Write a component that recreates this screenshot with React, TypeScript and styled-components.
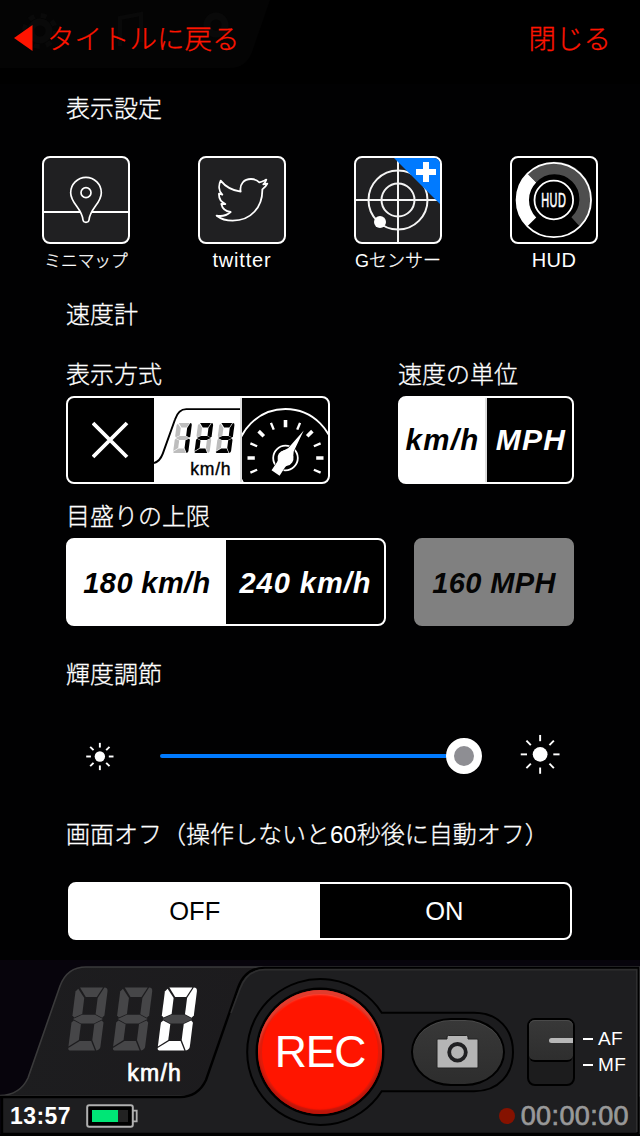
import React from "react";
import styled, { createGlobalStyle } from "styled-components";

const GlobalStyle = createGlobalStyle`
  *, *::before, *::after { box-sizing: border-box; }
  body { margin: 0; background: #010102; }
  button { font: inherit; color: inherit; background: none; border: 0; padding: 0; margin: 0; }
  svg { display: block; }
`;

const Screen = styled.div`
  width: 640px;
  height: 1136px;
  overflow: hidden;
  display: flex;
  flex-direction: column;
  background: #010102;
  color: #fff;
  font-family: "Liberation Sans", "Noto Sans CJK JP", sans-serif;
  font-weight: 300;
`;

const Header = styled.header`
  display: grid;
  height: 84px;
  background: #000;
  > * { grid-area: 1 / 1; }
`;

const HeaderBar = styled.div`
  display: flex;
  justify-content: space-between;
  align-items: center;
  height: 76px;
  padding: 0 29px 0 14px;
  color: #ff1400;
  font-size: 27.5px;
  line-height: 32px;
  -webkit-text-stroke: 0.3px #ff1400;
`;

const HeaderButton = styled.button`
  display: flex;
  align-items: center;
  gap: 14px;
  white-space: nowrap;
`;

const HeaderText = styled.span`
  padding-top: 3px;
`;

const Settings = styled.main`
  height: 876px;
  display: flex;
  flex-direction: column;
  padding: 13px 42px 0;
`;

const Label = styled.h2<{ $top?: number }>`
  margin: ${(p) => p.$top ?? 0}px 0 0 24px;
  height: 24px;
  line-height: 24px;
  font-size: 24px;
  font-weight: 300;
  white-space: nowrap;
  -webkit-text-stroke: 0.3px #fff;
`;

const Latin = styled.span`
  -webkit-text-stroke: 0;
`;

const Tiles = styled.div`
  display: flex;
  justify-content: space-between;
  margin-top: 35px;
`;

const Tile = styled.button`
  width: 88px;
  display: flex;
  flex-direction: column;
  align-items: center;
`;

const TileFace = styled.span<{ $black?: boolean }>`
  width: 88px;
  height: 88px;
  border: 2px solid #fff;
  border-radius: 8px;
  overflow: hidden;
  background: ${(p) => (p.$black ? "#000" : "#202022")};
`;

const TileCaption = styled.span<{ $size: number; $spacing?: number; $drop?: number }>`
  margin-top: ${(p) => 4 + (p.$drop ?? 0)}px;
  height: ${(p) => 24 - (p.$drop ?? 0)}px;
  line-height: 24px;
  font-size: ${(p) => p.$size}px;
  letter-spacing: ${(p) => p.$spacing ?? 0}px;
  white-space: nowrap;
  -webkit-text-stroke: ${(p) => (p.$drop ? 0.3 : 0)}px #fff;
`;

const Fields = styled.div<{ $top: number; $gap: number }>`
  display: flex;
  align-items: flex-end;
  gap: ${(p) => p.$gap}px;
  margin: ${(p) => p.$top}px 0 0 24px;
`;

const Field = styled.div`
  display: flex;
  flex-direction: column;
  gap: 9px;
  ${Label} { margin-left: 0; }
`;

const Segmented = styled.div<{ $width: number; $height?: number; $disabled?: boolean; $lead?: boolean }>`
  display: flex;
  width: ${(p) => p.$width}px;
  height: ${(p) => p.$height ?? 88}px;
  border: 2px solid ${(p) => (p.$disabled ? "#808080" : "#fff")};
  border-radius: 8px;
  overflow: hidden;
  background: ${(p) =>
    p.$disabled ? "#808080" : p.$lead ? "linear-gradient(90deg, #fff 50%, #000 50%)" : "#000"};
`;

const Segment = styled.button<{ $on?: boolean; $divider?: boolean }>`
  flex: 1;
  display: flex;
  align-items: center;
  justify-content: center;
  overflow: hidden;
  background: ${(p) => (p.$on ? "#fff" : "transparent")};
  color: ${(p) => (p.$on ? "#000" : "#fff")};
  border-left: ${(p) => (p.$divider ? "2px solid #ddd" : "0")};
`;

const Unit = styled.span<{ $spacing?: number; $size?: number; $drop?: number; $indent?: number; $dim?: boolean }>`
  padding: ${(p) => p.$drop ?? 0}px 0 0 ${(p) => p.$indent ?? 0}px;
  font-size: ${(p) => p.$size ?? 29}px;
  font-weight: 700;
  font-style: italic;
  letter-spacing: ${(p) => p.$spacing ?? 0}px;
  white-space: nowrap;
  color: ${(p) => (p.$dim ? "#050505" : "inherit")};
`;

const SliderRow = styled.div`
  display: flex;
  align-items: center;
  height: 44px;
  margin-top: 47px;
  padding: 0 37px 0 42px;
`;

const Track = styled.div`
  flex: none;
  display: flex;
  align-items: center;
  width: 322px;
  height: 36px;
  margin: 0 37px 0 44px;
`;

const TrackFill = styled.div`
  flex: 1;
  height: 4px;
  margin-right: -2px;
  border-radius: 2px;
  background: #007aff;
`;

const Thumb = styled.div`
  width: 36px;
  height: 36px;
  border-radius: 50%;
  border: 8px solid #fff;
  background: #8e8e93;
`;

const PowerToggle = styled(Segmented)`
  margin: 35px 0 0 26px;
  padding-right: 1px;
  font-size: 25.5px;
`;

const Dock = styled.footer`
  display: grid;
  width: 640px;
  height: 176px;
  > * { grid-area: 1 / 1; }
`;

const DockFront = styled.div`
  display: flex;
  flex-direction: column;
`;

const Controls = styled.div`
  display: flex;
  align-items: flex-start;
  height: 138px;
  padding-left: 67px;
`;

const Speed = styled.div`
  width: 191px;
  padding-top: 26px;
`;

const SpeedUnit = styled.div`
  width: 115px;
  margin-top: 9px;
  line-height: 24px;
  font-size: 23px;
  letter-spacing: 1.2px;
  text-align: right;
  -webkit-text-stroke: 0.7px #fff;
`;

const RecButton = styled.button`
  width: 124px;
  height: 124px;
  margin-top: 30px;
  border-radius: 50%;
  background: #ff1500;
  box-shadow: 0 0 0 2.5px #000, inset 0 0 0 4px rgba(170, 40, 30, 0.35),
    inset 0 5px 2px rgba(255, 150, 140, 0.4), inset 0 -4px 2px rgba(120, 0, 0, 0.4);
  font-size: 44.5px;
  letter-spacing: -1.2px;
  line-height: 124px;
  text-align: center;
`;

const ShutterButton = styled.button`
  display: flex;
  align-items: center;
  justify-content: center;
  width: 94px;
  height: 68px;
  margin: 58px 0 0 29px;
  border: 2px solid #000;
  border-radius: 40px / 34px;
  background: linear-gradient(#383838, #2d2d2d);
  box-shadow: inset 0 1px 0 #4a4a4a;
`;

const FocusSwitch = styled.div`
  width: 48px;
  height: 68px;
  margin: 58px 0 0 22px;
  border: 2px solid #000;
  border-radius: 8px;
  background: #1c1c1d;
`;

const FocusKnob = styled.div`
  display: flex;
  align-items: center;
  justify-content: flex-end;
  height: 42px;
  border-bottom: 2px solid #000;
  border-radius: 6px;
  background: linear-gradient(#383838, #2e2e2e);
  box-shadow: inset 0 1px 0 #4a4a4a;
`;

const FocusMark = styled.span`
  width: 24px;
  height: 5px;
  border-radius: 3px 0 0 3px;
  background: #b8b8b8;
`;

const FocusLabels = styled.div`
  display: flex;
  flex-direction: column;
  gap: 2px;
  margin: 67px 0 0 8px;
`;

const FocusLabel = styled.div`
  display: flex;
  align-items: center;
  gap: 5px;
  height: 24px;
  font-size: 19px;
  letter-spacing: 0.4px;
  &::before {
    content: "";
    width: 10px;
    height: 2px;
    background: #fff;
  }
`;

const Status = styled.div`
  display: flex;
  align-items: center;
  height: 36px;
  padding: 0 11px 0 10px;
`;

const Clock = styled.time`
  width: 76px;
  padding-top: 1px;
  font-size: 23px;
  font-weight: 700;
  letter-spacing: 0.4px;
`;

const Elapsed = styled.div`
  display: flex;
  align-items: center;
  gap: 6px;
  margin-left: auto;
  color: #999;
  font-size: 27px;
  letter-spacing: 0.4px;
  -webkit-text-stroke: 0.7px #999;
  &::before {
    content: "";
    width: 16px;
    height: 16px;
    border-radius: 50%;
    background: #851200;
  }
`;

/* Segments of one upright digit, 32 x 63 */
const SEGMENTS: Record<string, string> = {
  a: "M4 0 L27 0 L22 9.5 L11 9.5 Z",
  f: "M2.4 1.2 L9.6 10.5 L9.6 26.3 L2 30 L0 28 L0 4 Z",
  b: "M28.4 0 Q32 0 32 4 L32 28 L30 30.2 L23 26.6 L23 10.5 Z",
  g: "M1 31.5 L9.5 27.2 L22.6 27.2 L31 31.5 L22.6 35.8 L9.5 35.8 Z",
  e: "M2 33 L9.6 36.7 L9.6 52.5 L0 59 L0 35 Z",
  c: "M30 32.8 L32 35 L32 59 Q32 62 28.4 63 L23 52.5 L23 36.4 Z",
  d: "M0 60.4 L10.6 53.5 L22 53.5 L27 63 L3 63 Q0 63 0 60.4 Z",
};

const DIGITS: Record<string, string> = {
  " ": "",
  "0": "abcdef",
  "1": "bc",
  "2": "abged",
  "3": "abgcd",
};

function Digit({ value, x, on, off }: { value: string; x: number; on: string; off: string }) {
  return (
    <g transform={`translate(${x} 0) skewX(-7.3)`}>
      {Object.entries(SEGMENTS).map(([name, d]) => (
        <path key={name} d={d} fill={DIGITS[value].includes(name) ? on : off} />
      ))}
    </g>
  );
}

function MapIcon() {
  return (
    <svg width="84" height="84" viewBox="2 2 84 84">
      <path d="M0 56H88" stroke="#fff" strokeWidth="2" />
      <g transform="translate(-22 -16) scale(.33333)" stroke="#fff" strokeWidth="5">
        <path
          fill="#202022"
          d="M152 158 A46 46 0 0 1 244 158 C244 190 210 205 207 240 Q206 247 198 247 Q190 247 189 240 C186 205 152 190 152 158Z"
        />
        <circle cx="198" cy="158" r="15" fill="none" />
      </g>
    </svg>
  );
}

function BirdIcon() {
  return (
    <svg width="84" height="84" viewBox="2 2 84 84">
      <path
        transform="translate(-178 -16) scale(.33333)"
        fill="none"
        stroke="#fff"
        strokeWidth="5.4"
        strokeLinejoin="round"
        d="M602 122 C617 141 640 152 662 155 C658 132 672 117 693 117 C704 117 712 121 718 127 C725 126 732 122 739 119 C737 125 734 129 730 133 L742 131 C739 138 733 143 727 148 C728 200 694 242 638 242 C620 242 603 237 590 227 C606 230 621 226 632 216 C617 214 607 206 604 192 L616 192 C603 186 596 177 597 161 L607 164 C596 153 595 136 602 122Z"
      />
    </svg>
  );
}

function SensorIcon() {
  return (
    <svg width="84" height="84" viewBox="2 2 84 84" fill="none" stroke="#f4f4f4" strokeWidth="2">
      <circle cx="44" cy="44" r="29.5" />
      <circle cx="44" cy="44" r="16.5" />
      <path d="M44 0V88M0 44H88" />
      <circle cx="26" cy="66" r="6" fill="#fff" stroke="none" />
      <path d="M39 1 H87 V49 Z" fill="#007aff" stroke="none" />
      <path d="M72 6V26M62 16H82" stroke="#fff" strokeWidth="6" />
    </svg>
  );
}

function HudIcon() {
  return (
    <svg width="84" height="84" viewBox="2 2 84 84" fill="none">
      <path d="M21.8 22.1 A31 31 0 1 1 65.6 65.9" stroke="#4e4e4e" strokeWidth="12.5" />
      <path d="M21.8 65.9 A31 31 0 0 1 21.8 22.1" stroke="#fff" strokeWidth="12.5" />
      <circle cx="43.8" cy="44" r="37.2" stroke="#fff" strokeWidth="1.8" />
      <circle cx="43.8" cy="44" r="19.3" stroke="#fff" strokeWidth="1.8" />
      <text
        transform="translate(43.8 51) scale(.56 1)"
        textAnchor="middle"
        fontSize="19.5"
        letterSpacing="1"
        stroke="#fff"
        strokeWidth="0.6"
        fill="#fff"
      >
        HUD
      </text>
    </svg>
  );
}

function CrossIcon() {
  return (
    <svg width="38" height="38" viewBox="1 0 38 38">
      <path d="M2 2 L36 36 M36 2 L2 36" stroke="#fff" strokeWidth="3.8" />
    </svg>
  );
}

function DigitalIcon() {
  return (
    <svg width="88" height="84" viewBox="154 398 88 84">
      <path
        d="M154 463.6 Q160 462 163 454 L175.5 419 Q179 408.4 187 408.4 H242"
        fill="none"
        stroke="#000"
        strokeWidth="2"
      />
      <g transform="translate(173.5 422.7) scale(.485)">
        {["1", "2", "3"].map((n, i) => (
          <Digit key={n} value={n} x={8 + i * 45} on="#000" off="#bdbdbd" />
        ))}
      </g>
      <text x="191" y="475.5" fontSize="18" letterSpacing="0.8" stroke="#000" strokeWidth="0.4" fill="#000">
        km/h
      </text>
    </svg>
  );
}

function GaugeIcon() {
  const ticks = [-22.5, 0, 22.5, 45, 67.5, 90, 112.5, 135, 157.5, 180, 202.5];
  return (
    <svg width="86" height="84" viewBox="242.5 398 86 84">
      <circle cx="286" cy="458" r="49" fill="none" stroke="#fff" strokeWidth="1.8" />
      {ticks.map((angle) => (
        <path
          key={angle}
          d="M248 458 H255.3"
          stroke="#fff"
          strokeWidth={angle % 45 === 0 ? 3.6 : 2.4}
          transform={`rotate(${angle} 286 458)`}
        />
      ))}
      <circle cx="286" cy="458" r="12.3" fill="none" stroke="#fff" strokeWidth="1.8" />
      <g transform="translate(286 458) rotate(33.5)">
        <path
          d="M0 -33 L-3.2 -10 L-7 -3 L-4.8 8 V18 H4.8 V8 L7 -3 L3.2 -10Z"
          fill="#fff"
          stroke="#000"
          strokeWidth="1"
          paintOrder="stroke"
        />
        <circle r="8" fill="#fff" />
      </g>
    </svg>
  );
}

function Sun({ size, core, inner, outer, lift = 0 }: { size: number; core: number; inner: number; outer: number; lift?: number }) {
  return (
    <svg width={size} height={size} viewBox={`${-size / 2} ${-size / 2 + lift} ${size} ${size}`}>
      <circle r={core} fill="#fff" />
      {[0, 45, 90, 135, 180, 225, 270, 315].map((a) => (
        <path key={a} d={`M${inner} 0H${outer}`} stroke="#fff" strokeWidth="2" transform={`rotate(${a})`} />
      ))}
    </svg>
  );
}

function CameraIcon() {
  return (
    <svg width="44" height="36" viewBox="0 0 44 36">
      <path
        d="M2 5 H11 V3 Q11 1.5 12.5 1.5 H30.5 Q32 1.5 32 3 V5 H41 Q42 5 42 6 V33 Q42 34 41 34 H2 Q1 34 1 33 V6 Q1 5 2 5Z"
        fill="#b5b5b5"
        stroke="#222"
        strokeWidth="1"
      />
      <circle cx="21.5" cy="18.3" r="8.3" fill="#b5b5b5" stroke="#202022" strokeWidth="3.8" />
    </svg>
  );
}

function BatteryIcon() {
  return (
    <svg width="52" height="24" viewBox="0 0 52 24">
      <rect x="1.2" y="1.2" width="45.6" height="21.6" rx="2" fill="#000" stroke="#b0b0b0" strokeWidth="2" />
      <path d="M47 6.7H50.7V17.3H47" fill="none" stroke="#b0b0b0" strokeWidth="1.8" />
      <path d="M32 6H42V18H32Z" fill="#222" />
      <path d="M6 6H32V18H6Z" fill="#00e676" />
    </svg>
  );
}

function ToolbarGhost() {
  return (
    <svg width="640" height="84" viewBox="0 0 640 84">
      <path d="M0 0H270L252 52Q246 68 230 68H0Z" fill="#040404" />
      <circle cx="40" cy="31" r="9" fill="none" stroke="#090909" strokeWidth="7" />
      <circle cx="40" cy="31" r="15.5" fill="none" stroke="#090909" strokeWidth="5" strokeDasharray="6 6.2" />
      <path d="M120 46V18L141 14V42" fill="none" stroke="#090909" strokeWidth="4" />
      <circle cx="216" cy="25" r="9" fill="none" stroke="#090909" strokeWidth="7" />
    </svg>
  );
}

function DockChassis() {
  return (
    <svg width="640" height="176" viewBox="0 960 640 176">
      <defs>
        <linearGradient id="meter" x1="0" y1="0" x2="1" y2="0">
          <stop offset="0" stopColor="#1d1d1f" />
          <stop offset="1" stopColor="#1b181b" />
        </linearGradient>
      </defs>
      <rect y="960" width="640" height="176" fill="#07040c" />
      <path d="M2 1097H640V1134H2Z" fill="#1e1e20" />
      <path
        d="M0 1095.5 Q20 1095 28 1078 L60 986 Q67 967 86 967 H640 V1096 H0Z"
        fill="url(#meter)"
        stroke="#3a3a3b"
        strokeWidth="1.6"
      />
      <path
        d="M0 1097 H180 Q198 1097 206 1080 L238 988 Q245 968 264 968 H638 V1134 H2 V1097"
        fill="#1e1e20"
        stroke="#000"
        strokeWidth="2.4"
      />
      <path d="M231 1013 L240 989 Q247 969.6 265 969.6 H636.8 V1132" fill="none" stroke="#2e2e2f" strokeWidth="1.6" />
      <path
        d="M381.7 1012.7 A73 73 0 1 0 381.7 1091.3 H474 C499 1091.3 513 1074 513 1052 C513 1030 499 1012.7 474 1012.7 Z"
        fill="#1c1c1e"
        stroke="#000"
        strokeWidth="2"
      />
      <path d="M0 1135H640" stroke="#000" strokeWidth="2" />
    </svg>
  );
}

export default function App() {
  return (
    <>
      <GlobalStyle />
      <Screen>
        <Header>
          <ToolbarGhost />
          <HeaderBar>
            <HeaderButton>
              <svg width="19" height="26" viewBox="0 0 19 26">
                <path d="M0 13L18.5 0V26Z" fill="#ff1400" />
              </svg>
              <HeaderText>タイトルに戻る</HeaderText>
            </HeaderButton>
            <HeaderButton>
              <HeaderText>閉じる</HeaderText>
            </HeaderButton>
          </HeaderBar>
        </Header>

        <Settings>
          <Label>表示設定</Label>
          <Tiles>
            <Tile>
              <TileFace><MapIcon /></TileFace>
              <TileCaption $size={16.7} $drop={2}>ミニマップ</TileCaption>
            </Tile>
            <Tile>
              <TileFace><BirdIcon /></TileFace>
              <TileCaption $size={20} $spacing={0.8}>twitter</TileCaption>
            </Tile>
            <Tile>
              <TileFace><SensorIcon /></TileFace>
              <TileCaption $size={18} $drop={1}><Latin>G</Latin>センサー</TileCaption>
            </Tile>
            <Tile>
              <TileFace $black><HudIcon /></TileFace>
              <TileCaption $size={20} $spacing={0.4}>HUD</TileCaption>
            </Tile>
          </Tiles>

          <Label $top={31}>速度計</Label>
          <Fields $top={36} $gap={68}>
            <Field>
              <Label>表示方式</Label>
              <Segmented $width={264}>
                <Segment><CrossIcon /></Segment>
                <Segment $on><DigitalIcon /></Segment>
                <Segment $divider><GaugeIcon /></Segment>
              </Segmented>
            </Field>
            <Field>
              <Label>速度の単位</Label>
              <Segmented $width={176} $lead>
                <Segment $on><Unit $size={29.5} $spacing={1.3}>km/h</Unit></Segment>
                <Segment $divider><Unit $size={30} $spacing={1.2} $indent={3}>MPH</Unit></Segment>
              </Segmented>
            </Field>
          </Fields>
          <Fields $top={21} $gap={28}>
            <Field>
              <Label>目盛りの上限</Label>
              <Segmented $width={320} $lead>
                <Segment $on><Unit $drop={3} $spacing={0.4}>180 km/h</Unit></Segment>
                <Segment><Unit $drop={3} $spacing={1} $indent={1}>240 km/h</Unit></Segment>
              </Segmented>
            </Field>
            <Segmented $width={160} $disabled>
              <Segment><Unit $drop={3} $spacing={0.4} $dim>160 MPH</Unit></Segment>
            </Segmented>
          </Fields>

          <Label $top={37}>輝度調節</Label>
          <SliderRow>
            <Sun size={33} core={5.4} inner={9.3} outer={14.2} />
            <Track>
              <TrackFill />
              <Thumb />
            </Track>
            <Sun size={44} core={7.7} inner={13.7} outer={20.2} lift={1.7} />
          </SliderRow>

          <Label $top={45}>画面オフ（操作しないと<Latin>60</Latin>秒後に自動オフ）</Label>
          <PowerToggle $width={504} $height={58} $lead>
            <Segment $on>OFF</Segment>
            <Segment>ON</Segment>
          </PowerToggle>
        </Settings>

        <Dock>
          <DockChassis />
          <DockFront>
            <Controls>
              <Speed>
                <svg width="136" height="66" viewBox="0 -1.6 136 66">
                  {[" ", " ", "0"].map((v, i) => (
                    <Digit key={i} value={v} x={9 + i * 44.7} on="#fff" off="#464648" />
                  ))}
                </svg>
                <SpeedUnit>km/h</SpeedUnit>
              </Speed>
              <RecButton>REC</RecButton>
              <ShutterButton aria-label="Photo"><CameraIcon /></ShutterButton>
              <FocusSwitch>
                <FocusKnob><FocusMark /></FocusKnob>
              </FocusSwitch>
              <FocusLabels>
                <FocusLabel>AF</FocusLabel>
                <FocusLabel>MF</FocusLabel>
              </FocusLabels>
            </Controls>
            <Status>
              <Clock>13:57</Clock>
              <BatteryIcon />
              <Elapsed>00:00:00</Elapsed>
            </Status>
          </DockFront>
        </Dock>
      </Screen>
    </>
  );
}
